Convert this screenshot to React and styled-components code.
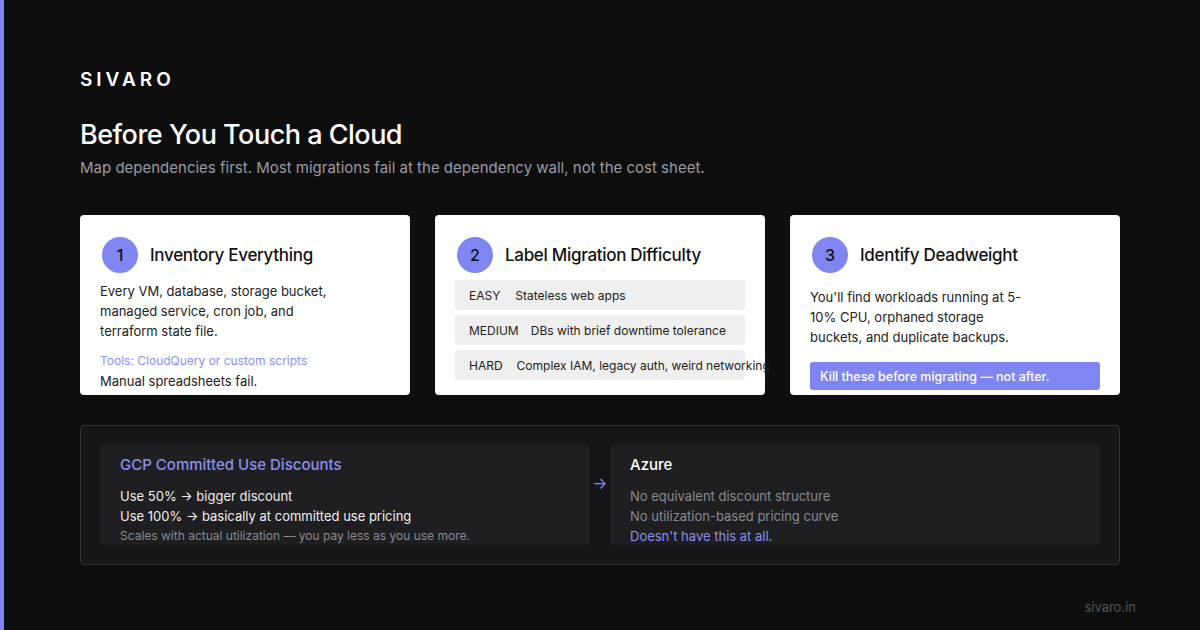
import React from "react";
import styled, { createGlobalStyle } from "styled-components";

const G = createGlobalStyle`
  body{margin:0;background:#0e0e0f;font-family:Inter,"Liberation Sans",sans-serif;}
`;
const Page = styled.div`
  width:1200px;height:630px;box-sizing:border-box;position:relative;overflow:hidden;
  border-left:4px solid #7f86f2;padding:68px 0 0 76px;
`;
const Brand = styled.div`color:#fff;font-size:19px;font-weight:600;letter-spacing:4px;line-height:24px;`;
const Title = styled.h1`margin:26px 0 0;color:#fff;font-size:27px;font-weight:500;letter-spacing:-0.5px;line-height:34px;`;
const Sub = styled.p`margin:6px 0 0;color:#9a9aa2;font-size:15px;line-height:20px;`;
const Cards = styled.div`display:grid;grid-template-columns:repeat(3,330px);gap:25px;margin-top:37px;`;
const Card = styled.div`background:#fff;border-radius:4px;height:180px;box-sizing:border-box;padding:22px 20px 0;`;
const Head = styled.div`display:flex;align-items:center;gap:12px;margin-left:2px;margin-bottom:${p=>p.$mb}px;`;
const Num = styled.div`width:36px;height:36px;border-radius:50%;background:#7f86f2;color:#111;display:flex;align-items:center;justify-content:center;font-size:16px;font-weight:500;`;
const CT = styled.div`font-size:17px;font-weight:500;color:#111;letter-spacing:-0.3px;`;
const Body = styled.div`font-size:13px;line-height:20px;color:#222;width:${p=>p.$w||"auto"};`;
const Link = styled.div`font-size:12px;line-height:20px;color:#8a90f0;margin-top:${p=>p.$mt||0}px;`;
const Row = styled.div`display:flex;gap:${p=>p.$g}px;align-items:center;background:#efefef;border-radius:3px;height:30px;padding:0 14px;margin-bottom:5px;font-size:12px;color:#222;white-space:nowrap;`;
const Kill = styled.div`background:#7f86f2;color:#fff;font-size:12.5px;font-weight:500;border-radius:3px;height:28px;display:flex;align-items:center;padding:0 10px;margin-top:15px;`;
const Box = styled.div`width:1040px;height:140px;box-sizing:border-box;margin-top:30px;border:1px solid #333336;border-radius:4px;background:#161618;padding:19px 19px;display:flex;align-items:flex-start;`;
const Panel = styled.div`width:490px;height:100px;background:#1f1f22;border-radius:3px;padding:11px 20px 0;box-sizing:border-box;`;
const PT = styled.div`font-size:15px;font-weight:500;color:${p=>p.$c};line-height:18px;margin-bottom:12px;`;
const Line = styled.div`font-size:${p=>p.$s||13}px;line-height:20px;color:${p=>p.$c};white-space:nowrap;`;
const Arrow = styled.div`width:20px;color:#7f86f2;font-size:16px;text-align:center;margin-top:28px;`;
const Foot = styled.div`position:absolute;right:64px;bottom:15px;color:#555;font-size:13px;`;

export default function App(){
  return (<><G/><Page>
    <Brand>SIVARO</Brand>
    <Title>Before You Touch a Cloud</Title>
    <Sub>Map dependencies first. Most migrations fail at the dependency wall, not the cost sheet.</Sub>
    <Cards>
      <Card>
        <Head $mb={8}><Num>1</Num><CT>Inventory Everything</CT></Head>
        <Body $w="240px">Every VM, database, storage bucket, managed service, cron job, and terraform state file.</Body>
        <Link $mt={10}>Tools: CloudQuery or custom scripts</Link>
        <Body>Manual spreadsheets fail.</Body>
      </Card>
      <Card style={{paddingLeft:20,paddingRight:20}}>
        <Head $mb={7}><Num>2</Num><CT>Label Migration Difficulty</CT></Head>
        <Row $g={15}><span>EASY</span><span>Stateless web apps</span></Row>
        <Row $g={12}><span>MEDIUM</span><span>DBs with brief downtime tolerance</span></Row>
        <Row $g={14}><span>HARD</span><span>Complex IAM, legacy auth, weird networking</span></Row>
      </Card>
      <Card>
        <Head $mb={14}><Num>3</Num><CT>Identify Deadweight</CT></Head>
        <Body $w="220px">You'll find workloads running at 5-10% CPU, orphaned storage buckets, and duplicate backups.</Body>
        <Kill>Kill these before migrating — not after.</Kill>
      </Card>
    </Cards>
    <Box>
      <Panel>
        <PT $c="#8a90f0">GCP Committed Use Discounts</PT>
        <Line $c="#eee">Use 50% → bigger discount</Line>
        <Line $c="#eee">Use 100% → basically at committed use pricing</Line>
        <Line $c="#8a8a90" $s={12}>Scales with actual utilization — you pay less as you use more.</Line>
      </Panel>
      <Arrow>→</Arrow>
      <Panel>
        <PT $c="#fff">Azure</PT>
        <Line $c="#8a8a90">No equivalent discount structure</Line>
        <Line $c="#8a8a90">No utilization-based pricing curve</Line>
        <Line $c="#8a90f0">Doesn't have this at all.</Line>
      </Panel>
    </Box>
    <Foot>sivaro.in</Foot>
  </Page></>);
}
